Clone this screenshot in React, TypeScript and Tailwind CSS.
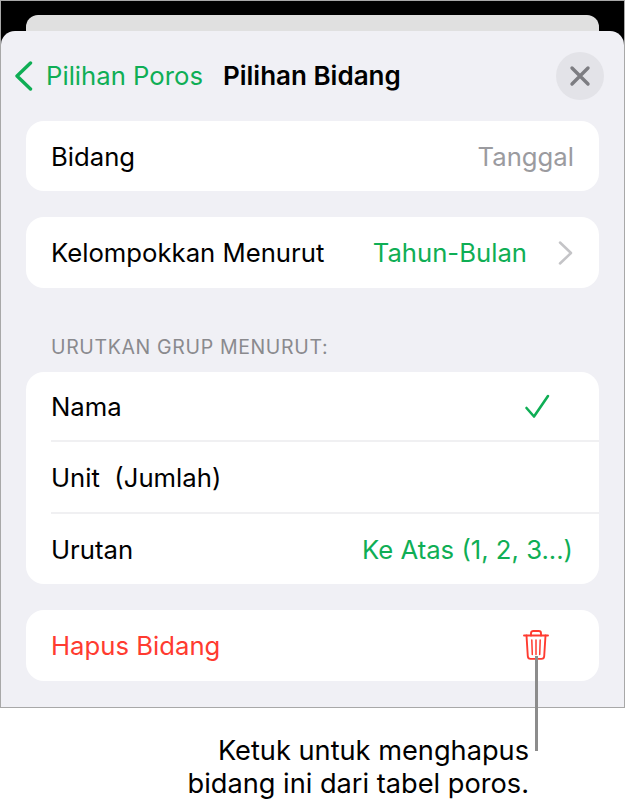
function TrashIcon() {
  return (
    <svg width="26" height="30" viewBox="0 0 26 30" fill="none" stroke="#ff3b30" strokeWidth="1.9" strokeLinecap="round" strokeLinejoin="round">
      <path d="M1 5.500h24" />
      <path d="M8 5.500V3.200C8 1.800 9 1 10.300 1h5.400C17 1 18 1.800 18 3.200v2.300" />
      <path d="M3.500 5.500l1.300 20.700c.1 1.700 1.100 2.700 2.800 2.700h10.800c1.700 0 2.700-1 2.800-2.700l1.300-20.700" />
      <path d="M8.800 10l.5 14.500M13 10v14.500M17.200 10l-.5 14.500" strokeWidth="1.500" />
    </svg>
  )
}

export default function App() {
  return (
    <div className="relative w-[627px] h-[806px] bg-white font-['Inter',sans-serif] overflow-hidden">
      <div className="w-[625px] h-[708px] bg-black border border-[#a8a8a8] flex flex-col pt-[14px]">
        <div className="ml-[25px] mr-[25px] h-[16px] shrink-0 bg-[#e0e0e0] rounded-t-[12px]" />
        <div className="flex-1 bg-[#f0f0f5] rounded-t-[14px] pl-[25px] pr-[25px] flex flex-col">
          <div className="h-[90px] flex items-center shrink-0 -mx-[25px] pl-[13px] pr-[20px]">
            <svg width="19" height="30" viewBox="0 0 19 30" fill="none" stroke="#0fae55" strokeWidth="3.400" strokeLinecap="round" strokeLinejoin="round">
              <path d="M16.500 2L3 15l13.500 13" />
            </svg>
            <span className="text-[25.700px] text-[#0fae55] ml-[13px]">Pilihan Poros</span>
            <span className="text-[26px] font-semibold text-black ml-[20px] -mt-[1px]">Pilihan Bidang</span>
            <div className="ml-auto w-[48px] h-[48px] rounded-full bg-[#e3e3e8] flex items-center justify-center">
              <svg width="22" height="22" viewBox="0 0 22 22" fill="none" stroke="#7d7d82" strokeWidth="3.400" strokeLinecap="round">
                <path d="M3 3l16 16M19 3L3 19" />
              </svg>
            </div>
          </div>

          <div className="h-[70px] bg-white rounded-[18px] flex items-center justify-between pl-[25px] pr-[25px] pt-[2px] text-[25.700px] shrink-0">
            <span className="text-black">Bidang</span>
            <span className="text-[#9b9b9f]">Tanggal</span>
          </div>

          <div className="mt-[26px] h-[71px] bg-white rounded-[18px] flex items-center pl-[25px] pr-[26px] pt-[2px] text-[25.700px] shrink-0">
            <span className="text-black">Kelompokkan Menurut</span>
            <span className="text-[#0fae55] ml-auto">Tahun-Bulan</span>
            <svg width="17" height="26" viewBox="0 0 17 26" fill="none" stroke="#c4c4c7" strokeWidth="2.500" strokeLinecap="round" strokeLinejoin="round" className="ml-[30px] -mr-[1px] -mt-[2px]">
              <path d="M3 2.500l11 10.500L3 23.500" />
            </svg>
          </div>

          <div className="mt-[47px] h-[20px] pl-[25px] pt-[5px] flex items-center text-[19.500px] text-[#8a8a8e] tracking-[0.65px] shrink-0">URUTKAN GRUP MENURUT:</div>

          <div className="mt-[17px] bg-white rounded-[18px] pl-[25px] text-[25.700px] shrink-0">
            <div className="h-[70px] flex items-center border-b-2 border-[#f0f0f2] pr-[49px]">
              <span className="pt-[2px]">Nama</span>
              <svg width="26" height="25" viewBox="0 0 26 25" fill="none" stroke="#0fae55" strokeWidth="2.600" strokeLinecap="round" strokeLinejoin="round" className="ml-auto">
                <path d="M2.500 14l7.500 8.500L24 2" />
              </svg>
            </div>
            <div className="h-[72px] flex items-center border-b-2 border-[#f0f0f2]">
              <span className="whitespace-pre pt-[2px]">Unit  (Jumlah)</span>
            </div>
            <div className="h-[70px] flex items-center pr-[26px]">
              <span className="pt-[2px]">Urutan</span>
              <span className="ml-auto text-[#0fae55] pt-[2px]">Ke Atas (1, 2, 3...)</span>
            </div>
          </div>

          <div className="mt-[26px] h-[71px] bg-white rounded-[18px] flex items-center pl-[25px] pr-[50px] text-[25.700px] shrink-0">
            <span className="text-[#ff3b30] pt-[2px]">Hapus Bidang</span>
            <div className="ml-auto -mt-[2px]"><TrashIcon /></div>
          </div>
        </div>
      </div>

      {/* callout */}
      <div className="absolute left-[535px] top-[656px] w-[3px] h-[95px] bg-[#8c8c8c]" />
      <div className="absolute right-[98px] top-[734px] text-right text-[27.200px] leading-[33px] text-black whitespace-nowrap">
        <div>Ketuk untuk menghapus</div>
        <div>bidang ini dari tabel poros.</div>
      </div>
    </div>
  )
}
